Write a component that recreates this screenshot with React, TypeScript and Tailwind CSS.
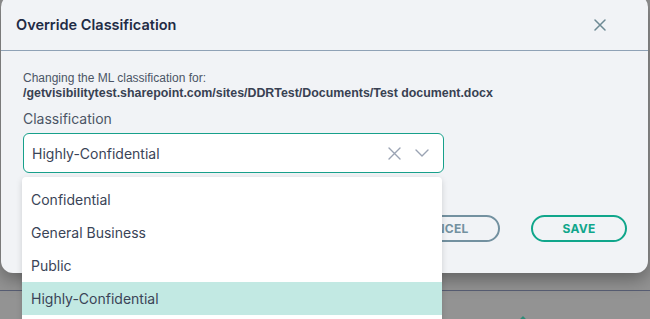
import React from "react";

const options = ["Confidential", "General Business", "Public", "Highly-Confidential"];

export default function App() {
  const selected = "Highly-Confidential";
  return (
    <div className="relative w-[650px] h-[319px] overflow-hidden bg-[#939393] font-['Inter',sans-serif]">
      {/* Page content behind the overlay */}
      <div className="absolute left-0 right-0 top-[290px] h-px bg-[#585e74]" />
      <div className="absolute left-[516px] top-[319px] w-[14px] h-[14px] rotate-45 bg-[#2f8a77]" />

      {/* Dialog */}
      <div className="absolute left-[1px] top-[-5px] w-[647px] rounded-[12px] bg-[#f1f3f6] shadow-[0_6px_18px_rgba(0,0,0,0.35)]">
        {/* Header */}
        <div className="flex items-center justify-between h-[56px] pt-[5px] pl-[15px] pr-[42px] border-b border-[#8fa2b6]">
          <h2 className="text-[14.5px] font-semibold text-[#1f2b45]">Override Classification</h2>
          <svg width="12" height="12" viewBox="0 0 12 12" className="text-[#6d8a94]">
            <path d="M1 1L11 11M11 1L1 11" stroke="currentColor" strokeWidth="1.5" strokeLinecap="round" />
          </svg>
        </div>

        {/* Body */}
        <div className="pt-[20px] pl-[22px] pr-[21px] pb-[31px]">
          <div className="font-['Liberation_Sans',Arial,sans-serif] text-[12px] leading-[15px]">
            <p className="text-[#4b5565]">Changing the ML classification for:</p>
            <p className="font-bold text-[12.4px] text-[#384152]">/getvisibilitytest.sharepoint.com/sites/DDRTest/Documents/Test document.docx</p>
          </div>

          <label className="block mt-[8px] text-[14px] leading-[20px] text-[#4b5565]">Classification</label>
          <div className="mt-[4px] w-[421px] h-[40px] flex items-center justify-between pl-[8px] pr-[14px] bg-white border border-[#17a08b] rounded-[6px]">
            <span className="text-[14px] text-[#3a4457]">{selected}</span>
            <div className="flex items-center gap-[14px] text-[#9aa3b3]">
              <svg width="13" height="13" viewBox="0 0 13 13">
                <path d="M1 1L12 12M12 1L1 12" stroke="currentColor" strokeWidth="1.4" strokeLinecap="round" />
              </svg>
              <svg width="14" height="8" viewBox="0 0 14 8">
                <path d="M1 1L7 7L13 1" fill="none" stroke="currentColor" strokeWidth="1.4" strokeLinecap="round" strokeLinejoin="round" />
              </svg>
            </div>
          </div>

          <div className="flex justify-end gap-[31px] mt-[42px]">
            <button className="w-[114px] h-[27px] rounded-full border-2 border-[#7391a0] text-[12px] font-bold tracking-wide text-[#7391a0]">
              CANCEL
            </button>
            <button className="w-[96px] h-[27px] rounded-full border-2 border-[#10a68b] text-[12px] font-bold tracking-wide text-[#10a68b]">
              SAVE
            </button>
          </div>
        </div>
      </div>

      {/* Open dropdown menu */}
      <ul className="absolute left-[22px] top-[177px] w-[420px] h-[160px] pt-[6px] bg-white rounded-[4px] shadow-[0_2px_6px_rgba(0,0,0,0.15)]">
        {options.map((o) => (
          <li
            key={o}
            className={`h-[33px] flex items-center pl-[9px] text-[14px] text-[#3a4457] ${o === selected ? "bg-[#c2e9e3]" : ""}`}
          >
            {o}
          </li>
        ))}
      </ul>
    </div>
  );
}
